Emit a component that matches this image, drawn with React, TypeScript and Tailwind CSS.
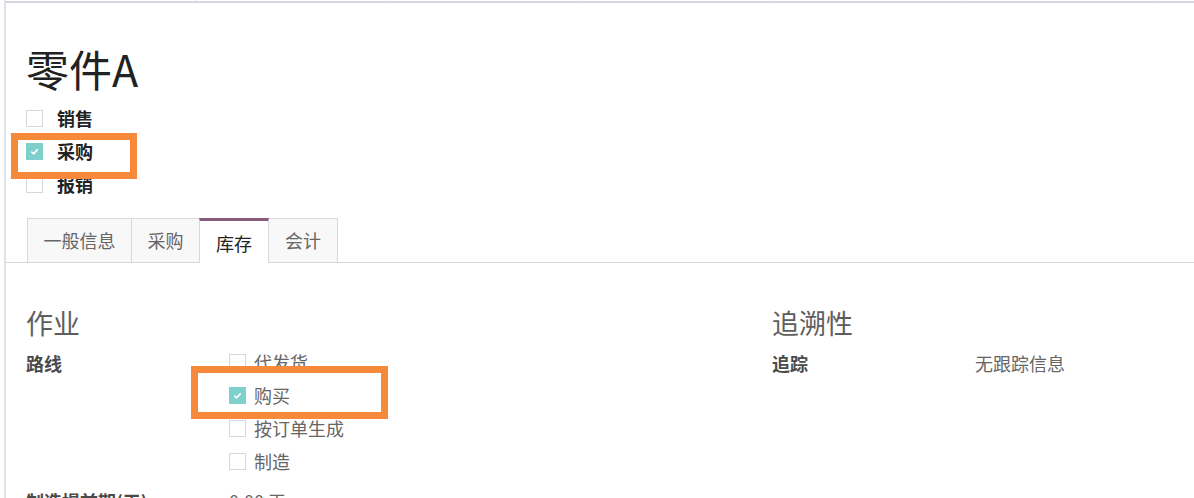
import React from "react";

const font = { fontFamily: '"Noto Sans CJK SC", "Noto Sans", sans-serif' };

function Box({ checked }: { checked?: boolean }) {
  if (checked) {
    return (
      <span className="flex h-[17px] w-[17px] shrink-0 items-center justify-center bg-[#7fcfcd]">
        <svg width="9" height="9" viewBox="0 0 10 10">
          <path d="M1.5 5.2 L4 7.5 L8.5 2.6" fill="none" stroke="#ffffff" strokeWidth="1.8" />
        </svg>
      </span>
    );
  }
  return <span className="h-[17px] w-[17px] shrink-0 border border-[#d8d8d8] bg-white" />;
}

const tabs = [
  { name: "一般信息", w: "w-[105px]" },
  { name: "采购", w: "w-[69px]" },
  { name: "库存", w: "w-[70px]" },
  { name: "会计", w: "w-[70px]" },
];
const routes = [
  { name: "代发货", on: false },
  { name: "购买", on: true },
  { name: "按订单生成", on: false },
  { name: "制造", on: false },
];

export default function App() {
  return (
    <div className="relative h-[498px] w-[1194px] overflow-hidden bg-white" style={font}>
      <div className="ml-[4px] h-full border-l-2 border-[#dfe3e8]">
        {/* top of list table */}
        <div className="flex h-[3px] border-b-2 border-[#d3d8de]">
          <div className="w-[191px] border-r border-[#e0e3e7]" />
          <div className="w-[193px] border-r border-[#e0e3e7]" />
          <div className="w-[192px] border-r border-[#e0e3e7]" />
          <div className="w-[192px] border-r border-[#e0e3e7]" />
          <div className="w-[192px] border-r border-[#e0e3e7]" />
          <div className="w-[192px] border-r border-[#e0e3e7]" />
        </div>

        <div className="pl-[20px]">
          <h1 className="mt-[40px] text-[43px] leading-[50px] text-[#222]">零件A</h1>
          <div className="mt-[9px]">
            {[
              { name: "销售", on: false },
              { name: "采购", on: true },
              { name: "报销", on: false },
            ].map((r) => (
              <div key={r.name} className="flex h-[33px] items-center">
                <Box checked={r.on} />
                <span className="ml-[14px] text-[18px] font-bold text-[#222]">{r.name}</span>
              </div>
            ))}
          </div>
        </div>

        {/* tabs */}
        <div className="mt-[17px] flex h-[45px] border-b border-[#d3d8de] pl-[21px]">
          {tabs.map((t) =>
            t.name === "库存" ? (
              <div
                key={t.name}
                className={`relative z-10 -mb-px -ml-px flex h-[45px] items-center justify-center border-x border-t-[3px] border-[#d3d8de] border-t-[#875a7b] bg-white pt-[2px] text-[18px] text-[#222] ${t.w}`}
              >
                {t.name}
              </div>
            ) : (
              <div
                key={t.name}
                className={`-ml-px flex h-[44px] items-center justify-center border border-b-0 border-[#d6d9de] bg-[#f8f8f8] text-[18px] text-[#666] first:ml-0 ${t.w}`}
              >
                {t.name}
              </div>
            )
          )}
        </div>

        {/* form groups */}
        <div className="flex pl-[20px]">
          <div className="w-[746px] shrink-0">
            <h2 className="mt-[42px] text-[27px] leading-[36px] text-[#5e5e5e]">作业</h2>
            <div className="mt-[5px] flex">
              <div className="w-[203px] pt-[5px] text-[18px] leading-[24px] font-bold text-[#4a4a4a]">路线</div>
              <div>
                {routes.map((r) => (
                  <div key={r.name} className="flex h-[33px] items-center">
                    <Box checked={r.on} />
                    <span className="ml-[8px] text-[18px] text-[#666]">{r.name}</span>
                  </div>
                ))}
              </div>
            </div>
            <div className="mt-[7px] flex h-[33px] items-center">
              <div className="w-[203px] text-[18px] font-bold text-[#4a4a4a]">制造提前期(天)</div>
              <div className="text-[18px] text-[#666]">0.00 天</div>
            </div>
          </div>
          <div className="w-[746px] shrink-0">
            <h2 className="mt-[42px] text-[27px] leading-[36px] text-[#5e5e5e]">追溯性</h2>
            <div className="mt-[5px] flex">
              <div className="w-[203px] pt-[5px] text-[18px] leading-[24px] font-bold text-[#4a4a4a]">追踪</div>
              <div className="pt-[5px] text-[18px] leading-[24px] text-[#666]">无跟踪信息</div>
            </div>
          </div>
        </div>
      </div>

      {/* annotation highlights */}
      <div className="absolute left-[11px] top-[133px] h-[46px] w-[126px] border-[7px] border-[#f68a3a]" />
      <div className="absolute left-[191px] top-[366px] h-[53px] w-[197px] border-[7px] border-[#f68a3a]" />
    </div>
  );
}
